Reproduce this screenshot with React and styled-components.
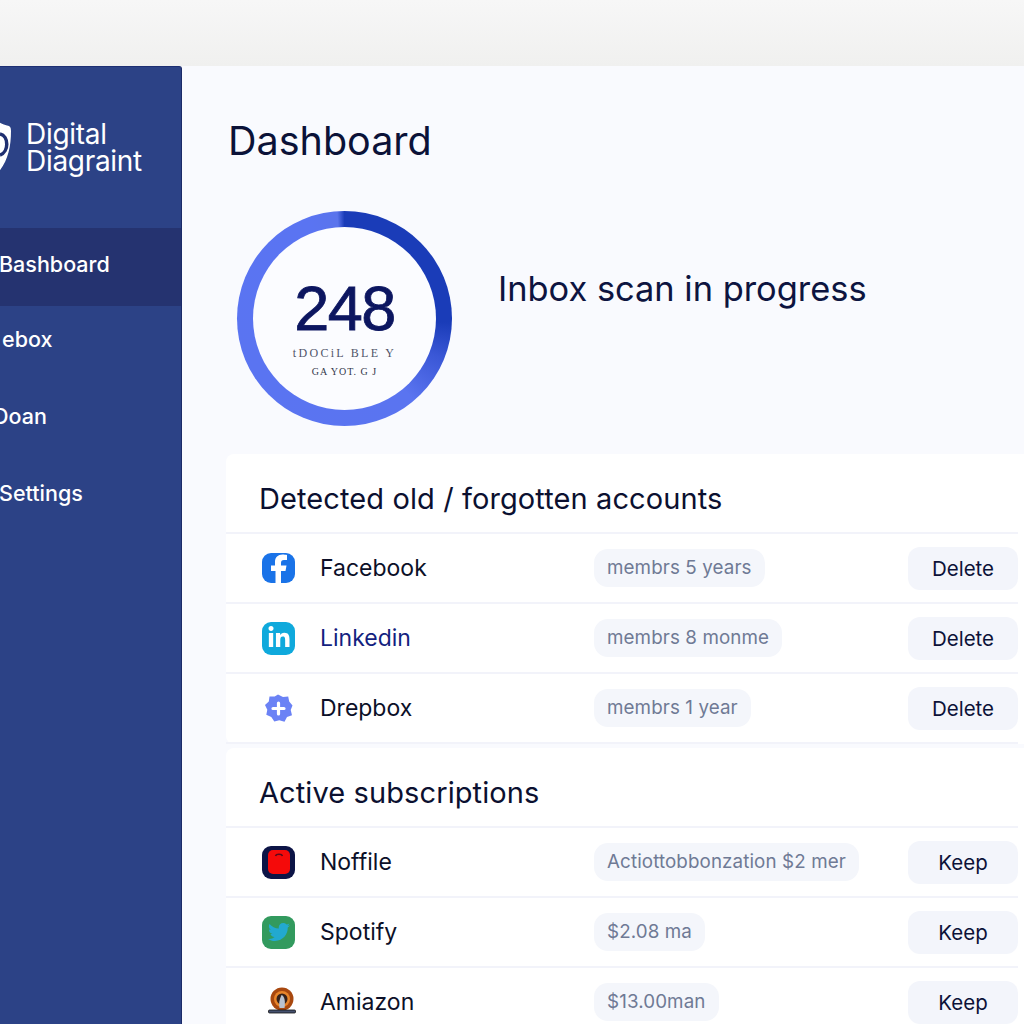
import React from "react";
import styled, { createGlobalStyle } from "styled-components";
import { FaLinkedinIn, FaTwitter } from "react-icons/fa";

const GlobalStyle = createGlobalStyle`
  html, body {
    margin: 0;
    padding: 0;
    background: #f2f2f1;
    overflow: hidden;
  }
  * { box-sizing: border-box; }
`;

const FacebookIcon = () => (
  <BrandTile $bg="#1a73e8" $short>
    <svg width="33" height="30" viewBox="0 0 33 30">
      <path
        d="M19 30V18h4.500l1-5.500H19V10c0-2 .8-3 3-3h3V2c-1-.2-3-.5-4.500-.5-4.500 0-7.500 2.800-7.500 7.500v3.500H9V18h4.500v12z"
        fill="#fff"
      />
    </svg>
  </BrandTile>
);

const LinkedinIcon = () => (
  <BrandTile $bg="#0fa9dc">
    <FaLinkedinIn size={24} color="#fff" />
  </BrandTile>
);

const DropboxIcon = () => (
  <svg width="33" height="33" viewBox="0 0 33 33">
    <path
      d="M16 2.500l5 2.600 5.200-.6 1 5 3.300 4-1.800 4.500 1.300 5.200-5 1.800-2.500 4.700-5.200-1.500-5 1.300-3-4.500-5-2.200 1-5-2.300-4.700 3.800-3.500.7-5.200 5.200.2z"
      fill="#6b82f5"
    />
    <path d="M16.500 11v11M11 16.500h11" stroke="#fff" strokeWidth="3.200" strokeLinecap="round" />
  </svg>
);

const NoffileIcon = () => (
  <BrandTile $bg="#0c1446">
    <svg width="24" height="26" viewBox="0 0 24 26">
      <rect x="1" y="1" width="22" height="24" rx="5" fill="#f50a0a" />
      <path d="M8.500 7c.6-2.500 6.400-2.500 7 0" stroke="#5c0b1c" strokeWidth="1.500" fill="none" />
    </svg>
  </BrandTile>
);

const SpotifyIcon = () => (
  <BrandTile $bg="#329a5e">
    <FaTwitter size={22} color="#22a9d0" />
  </BrandTile>
);

const AmazonIcon = () => (
  <svg width="36" height="33" viewBox="0 0 36 33">
    <circle cx="20" cy="13" r="11.500" fill="#a8480f" />
    <circle cx="20" cy="13" r="8" fill="#e8852a" />
    <circle cx="20" cy="13" r="5.500" fill="#35211b" />
    <path d="M19.500 9c3 1 4 6 3 13h-5c-1-4 0-9 2-13z" fill="#b9c3d0" />
    <rect x="6.500" y="24" width="27" height="3" rx="1" fill="#44506e" stroke="#111" strokeWidth=".8" />
  </svg>
);

const oldAccounts = [
  { name: "Facebook", Icon: FacebookIcon, note: "membrs 5 years" },
  { name: "Linkedin", Icon: LinkedinIcon, note: "membrs 8 monme", accent: true },
  { name: "Drepbox", Icon: DropboxIcon, note: "membrs 1 year" },
];

const subscriptions = [
  { name: "Noffile", Icon: NoffileIcon, note: "Actiottobbonzation $2 mer" },
  { name: "Spotify", Icon: SpotifyIcon, note: "$2.08 ma" },
  { name: "Amiazon", Icon: AmazonIcon, note: "$13.00man" },
];

// labels run off the left edge of the shot, so each has its own offset
const navItems = [
  { label: "Bashboard", offset: -1 },
  { label: "ebox", offset: 2 },
  { label: "Doan", offset: -7 },
  { label: "Settings", offset: -1 },
];

const Section = ({ title, rows, action }) => (
  <Card>
    <CardTitle>{title}</CardTitle>
    {rows.map(({ name, Icon, note, accent }) => (
      <Row key={name}>
        <IconSlot>
          <Icon />
        </IconSlot>
        <RowName $accent={accent}>{name}</RowName>
        <div>
          <Pill>{note}</Pill>
        </div>
        <ActionButton>{action}</ActionButton>
      </Row>
    ))}
  </Card>
);

export default function App() {
  return (
    <>
      <GlobalStyle />
      <Page>
        <TopBand />
        <Shell>
          <Sidebar>
            <Brand>
              <svg width="32" height="58" viewBox="0 0 32 58">
                <path d="M16 1C21 4 25 6 28 6.500 31 7 32 8 32 12 32 30 28 45 16 57 3 45-1 28 1 7 6 6 11 4 16 1z" fill="#fff" />
                <path d="M21 15c9 2 9 18 0 21" stroke="#1f2f70" strokeWidth="3.500" fill="none" />
              </svg>
              <BrandName>
                Digital
                <br />
                Diagraint
              </BrandName>
            </Brand>
            <nav>
              {navItems.map(({ label, offset }, i) => (
                <NavItem key={label} $active={i === 0} $offset={offset}>
                  {label}
                </NavItem>
              ))}
            </nav>
          </Sidebar>
          <Main>
            <Title>Dashboard</Title>
            <ScanRow>
              <Ring>
                <RingInner>
                  <Count>248</Count>
                  <TinyLine>tDOCiL BLE Y</TinyLine>
                  <TinierLine>GA YOT. G J</TinierLine>
                </RingInner>
              </Ring>
              <ScanText>Inbox scan in progress</ScanText>
            </ScanRow>
            <Section title="Detected old / forgotten accounts" rows={oldAccounts} action="Delete" />
            <Section title="Active subscriptions" rows={subscriptions} action="Keep" />
          </Main>
        </Shell>
      </Page>
    </>
  );
}

const Page = styled.div`
  width: 1024px;
  height: 1024px;
  overflow: hidden;
  display: flex;
  flex-direction: column;
  font-family: Inter, "Noto Sans", sans-serif;
  color: #0d1230;
`;

const TopBand = styled.div`
  height: 66px;
  flex: none;
  background: linear-gradient(#f7f7f7, #f0f0ef);
`;

const Shell = styled.div`
  flex: 1;
  display: flex;
  min-height: 0;
`;

const Sidebar = styled.aside`
  width: 182px;
  flex: none;
  background: #2c4286;
  border-top: 1px solid #1d2f73;
  border-right: 1px solid #1b2a68;
  border-top-right-radius: 3px;
  overflow: hidden;
`;

const Brand = styled.div`
  height: 161px;
  display: flex;
  align-items: center;
  gap: 15px;
  margin-left: -21px;
`;

const BrandName = styled.div`
  font-size: 28px;
  line-height: 27px;
  letter-spacing: -0.3px;
  color: #fff;
`;

const NavItem = styled.div`
  height: ${(p) => (p.$active ? "78px" : "77px")};
  padding-bottom: ${(p) => (p.$active ? "6px" : "12px")};
  margin-left: ${(p) => p.$offset}px;
  display: flex;
  align-items: center;
  font-size: 21.500px;
  font-weight: 500;
  color: #fff;
  background: ${(p) => (p.$active ? "#253370" : "transparent")};
`;

const Main = styled.main`
  flex: 1;
  min-width: 0;
  background: #f9fafe;
  padding-left: 44px;
  padding-right: 6px;
`;

const Title = styled.h1`
  margin: 0;
  padding: 50px 0 0 2px;
  font-size: 39.500px;
  line-height: 50px;
  font-weight: 400;
  color: #0b1238;
`;

const ScanRow = styled.div`
  height: 288px;
  display: flex;
  align-items: flex-start;
  padding: 45px 0 0 11px;
`;

const Ring = styled.div`
  width: 215px;
  height: 215px;
  flex: none;
  padding: 16px;
  border-radius: 50%;
  background: conic-gradient(#1a3cb8 0deg, #1a3cb8 92deg, #3a57d6 112deg, #5a74f0 140deg, #5a74f2 340deg, #5a74ec 356deg, #1a3cb8 360deg);
`;

const RingInner = styled.div`
  width: 100%;
  height: 100%;
  border-radius: 50%;
  background: #fbfcff;
  display: flex;
  flex-direction: column;
  align-items: center;
  padding-top: 49px;
`;

const Count = styled.div`
  font-family: "Liberation Sans", sans-serif;
  font-size: 63px;
  line-height: 64px;
  letter-spacing: -1.500px;
  -webkit-text-stroke: 0.8px #0c1660;
  color: #0c1660;
`;

const TinyLine = styled.div`
  margin-top: 6px;
  font-family: "Liberation Serif", serif;
  font-size: 12px;
  line-height: 14px;
  letter-spacing: 2.300px;
  color: #50556a;
`;

const TinierLine = styled.div`
  margin-top: 6px;
  font-family: "Liberation Serif", serif;
  font-size: 10px;
  line-height: 12px;
  letter-spacing: 1px;
  color: #33374a;
`;

const ScanText = styled.div`
  margin: 56px 0 0 46px;
  font-size: 34.400px;
  line-height: 44px;
  color: #0d1440;
`;

const Card = styled.section`
  background: #fff;
  border-radius: 8px 0 0 8px;
  margin-right: -6px;
  padding-right: 6px;
  margin-bottom: 4px;
`;

const CardTitle = styled.h2`
  margin: 0;
  height: 80px;
  padding: 27px 0 0 33px;
  font-size: 29px;
  line-height: 36px;
  letter-spacing: 0.1px;
  font-weight: 400;
  color: #0b1030;
  border-bottom: 2px solid #f2f3fa;
`;

const Row = styled.div`
  height: 70px;
  display: grid;
  grid-template-columns: 58px 274px 1fr 110px;
  align-items: center;
  padding-left: 36px;
  border-bottom: 2px solid #f2f3fa;
`;

const IconSlot = styled.div`
  display: flex;
  align-items: center;
`;

const BrandTile = styled.div`
  width: 33px;
  height: ${(p) => (p.$short ? "30px" : "33px")};
  border-radius: 9px;
  overflow: hidden;
  display: flex;
  align-items: center;
  justify-content: center;
  background: ${(p) => p.$bg};
`;

const RowName = styled.div`
  font-size: 23px;
  color: ${(p) => (p.$accent ? "#141f80" : "#0c1028")};
`;

const Pill = styled.span`
  display: inline-block;
  height: 38px;
  padding: 0 13px;
  border-radius: 14px;
  font-size: 18.800px;
  line-height: 38px;
  letter-spacing: 0.1px;
  white-space: nowrap;
  color: #6f7a95;
  background: #f4f6fb;
`;

const ActionButton = styled.button`
  height: 43px;
  border: 0;
  border-radius: 12px;
  background: #f3f5fb;
  font-family: inherit;
  font-size: 20.500px;
  color: #0c1238;
`;
